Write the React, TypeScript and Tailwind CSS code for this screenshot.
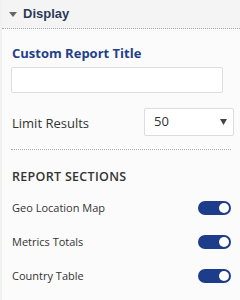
import React from "react";

function Toggle() {
  return (
    <div className="w-[33px] h-[14px] rounded-full bg-[#1d3c89] flex items-center justify-end pr-[2px]">
      <div className="w-[10px] h-[10px] rounded-full bg-white" />
    </div>
  );
}

function Row({ label }: { label: string }) {
  return (
    <div className="flex items-center justify-between h-[34px] pl-[12px] pr-[9px]">
      <span className="text-[11px] text-[#333]">{label}</span>
      <Toggle />
    </div>
  );
}

export default function App() {
  return (
    <div
      className="w-[240px] h-[300px] bg-[#fbfbfb] border-l-2 border-[#f1f1f1] overflow-hidden"
      style={{ fontFamily: '"Open Sans", sans-serif' }}
    >
      <div className="h-[29px] bg-[#f4f4f4] border-b border-dotted border-[#aaa] flex items-center pl-[7px]">
        <svg width="8" height="6" viewBox="0 0 8 6" className="mr-[6px] mt-[1px]">
          <polygon points="0,0 8,0 4,5" fill="#666" />
        </svg>
        <span
          className="text-[13px] font-bold text-[#2b3a57]"
          style={{ fontFamily: '"Liberation Sans", Arial, sans-serif' }}
        >
          Display
        </span>
      </div>
      <div className="px-[9px] pt-[15px]">
        <div className="text-[13px] font-bold text-[#243f8a] leading-[18px] pl-[1px]">Custom Report Title</div>
        <div className="mt-[5px] w-[212px] h-[26px] bg-white border border-[#ddd] rounded-[2px]" />
        <div className="mt-[15px] flex items-center justify-between pl-[1px]">
          <span className="text-[13px] text-[#333] pt-[3px]">Limit Results</span>
          <div className="w-[90px] h-[28px] bg-white border border-[#ddd] rounded-[2px] flex items-center justify-between pl-[9px] pr-[6px] mr-[-3px]">
            <span className="text-[13px] text-[#333]">50</span>
            <svg width="7" height="6" viewBox="0 0 7 6">
              <polygon points="0,0 7,0 3.5,6" fill="#444" />
            </svg>
          </div>
        </div>
        <div className="mt-[13px] border-b border-dotted border-[#aaa] w-[220px]" />
        <div className="mt-[18px] text-[12.5px] font-semibold text-[#333] tracking-[0.3px] pl-[1px] leading-[18px]">REPORT SECTIONS</div>
      </div>
      <div className="mt-[5px] -ml-[2px]">
        <Row label="Geo Location Map" />
        <Row label="Metrics Totals" />
        <Row label="Country Table" />
      </div>
    </div>
  );
}
